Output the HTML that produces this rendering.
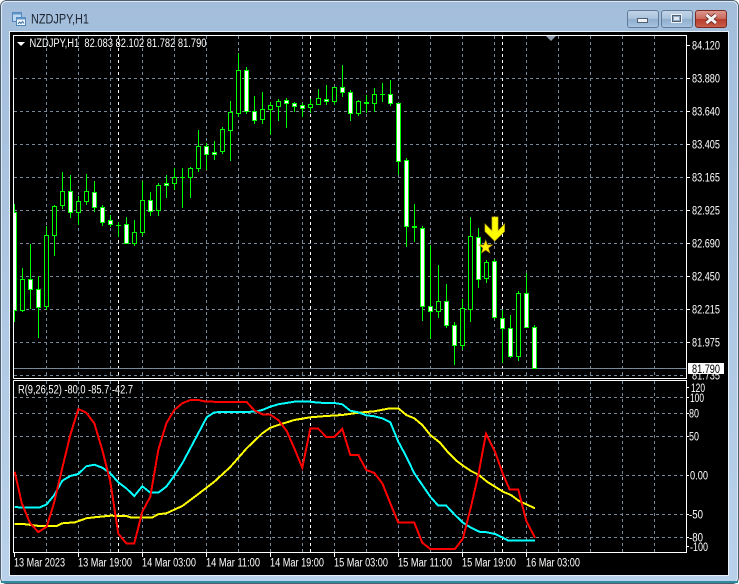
<!DOCTYPE html>
<html><head><meta charset="utf-8"><title>NZDJPY,H1</title>
<style>
html,body{margin:0;padding:0;background:#fff;width:739px;height:584px;overflow:hidden}
svg{display:block}
text{font-family:"Liberation Sans",sans-serif;font-size:11.5px;fill:#fff}
.g{stroke:#778899;stroke-width:1;stroke-dasharray:3 3;fill:none}
.w{stroke:#fff;stroke-width:1;stroke-dasharray:3 3;fill:none}
</style></head><body>
<svg width="739" height="584" viewBox="0 0 739 584" xmlns="http://www.w3.org/2000/svg">
<defs>
<linearGradient id="tb" x1="0" y1="0" x2="0" y2="1"><stop offset="0" stop-color="#a3bedb"/><stop offset="1" stop-color="#b9d1ea"/></linearGradient>
<linearGradient id="bt" x1="0" y1="0" x2="0" y2="1"><stop offset="0" stop-color="#c3d5e8"/><stop offset=".48" stop-color="#a9c2dc"/><stop offset=".52" stop-color="#8fadcd"/><stop offset="1" stop-color="#a9c6e2"/></linearGradient>
<linearGradient id="cl" x1="0" y1="0" x2="0" y2="1"><stop offset="0" stop-color="#dd9a90"/><stop offset=".48" stop-color="#cc6a5e"/><stop offset=".52" stop-color="#b83c2c"/><stop offset="1" stop-color="#c9604c"/></linearGradient>
<clipPath id="cm"><rect x="14" y="36" width="672" height="342"/></clipPath>
<clipPath id="cs"><rect x="14" y="381" width="672" height="172"/></clipPath>
</defs>
<!-- frame -->
<rect x=".5" y=".5" width="738" height="583" rx="6" fill="url(#tb)" stroke="#4d5f70"/>
<rect x="1.5" y="1.5" width="736" height="581" rx="5" fill="none" stroke="#dfe9f3"/>
<rect x="1" y="581" width="737" height="2" fill="#2f8a9c"/>
<rect x="9" y="31" width="720" height="545" fill="#e8f0f8"/>
<rect x="10" y="32" width="718" height="543" fill="#000"/>
<!-- icon -->
<g shape-rendering="crispEdges">
<rect x="12.5" y="12.5" width="9" height="9" fill="#bcd8f2" stroke="#4f84b8"/>
<rect x="12.5" y="12.5" width="9" height="2" fill="#5f95c8"/>
<rect x="16.5" y="17.5" width="9" height="8" fill="#f2f7fc" stroke="#4f84b8"/>
<rect x="16.5" y="17.5" width="9" height="2" fill="#5f95c8"/>
</g>
<path d="M18 24l1.500-2 1.500 1.500 1.500-2 1.500 2" fill="none" stroke="#3a6f9f" stroke-width="1"/>
<text x="31" y="23.500" textLength="58" lengthAdjust="spacingAndGlyphs" style="font-size:13.5px;fill:#1c2530">NZDJPY,H1</text>
<!-- buttons -->
<rect x="627.500" y="10.500" width="31" height="17" rx="2.500" fill="url(#bt)" stroke="#5f7b98"/>
<rect x="661.500" y="10.500" width="31" height="17" rx="2.500" fill="url(#bt)" stroke="#5f7b98"/>
<rect x="695.500" y="10.500" width="31" height="17" rx="2.500" fill="url(#cl)" stroke="#7b2a22"/>
<rect x="637.500" y="18.500" width="10" height="4" fill="#eef3f8" stroke="#4f5f70"/>
<rect x="671.500" y="14.500" width="10" height="8" fill="none" stroke="#eef3f8" stroke-width="1"/>
<rect x="672.500" y="15.500" width="8" height="6" fill="#8fa9c4" stroke="#4f5f70"/>
<rect x="674" y="17" width="5" height="3" fill="#e0e8f0"/>
<path d="M706.500 15l9.500 8M716 15l-9.500 8" stroke="#5f2018" stroke-width="4.500" fill="none"/>
<path d="M706.500 15l9.500 8M716 15l-9.500 8" stroke="#f4f4f4" stroke-width="3" fill="none"/>
<!-- grid main -->
<g clip-path="url(#cm)" shape-rendering="crispEdges">
<path class="g" d="M14 78.500H686M14 111.500H686M14 144.500H686M14 177.500H686M14 210.500H686M14 243.500H686M14 276.500H686M14 309.500H686M14 342.500H686M14 375.500H686"/>
<path class="g" d="M46.500 36V378M78.500 36V378M110.500 36V378M142.500 36V378M174.500 36V378M206.500 36V378M238.500 36V378M270.500 36V378M302.500 36V378M334.500 36V378M366.500 36V378M398.500 36V378M430.500 36V378M462.500 36V378M494.500 36V378M526.500 36V378M558.500 36V378M590.500 36V378M622.500 36V378M654.500 36V378"/>
<path class="w" d="M118.500 36V378M310.500 36V378M502.500 36V378"/>
<path d="M14 368.500H686" stroke="#778899" stroke-width="1" fill="none"/>
<!-- wicks -->
<path fill="none" stroke="#00ff00" stroke-width="1" d="M14.500 204V322M22.500 268V312M30.500 244V309M38.500 276V338M46.500 226V310M54.500 205V256M62.500 172V209M70.500 175V218M78.500 196V225M86.500 174V205M94.500 181V212M102.500 205V226M110.500 215V227M118.500 222V237M126.500 217V244M134.500 220V246M142.500 181V236M150.500 192V216M158.500 183V216M166.500 175V198M174.500 168V190M182.500 168V208M190.500 167V198M198.500 130V172M206.500 143V170M214.500 141V160M222.500 127V154M230.500 101V161M238.500 53V117M246.500 67V114M254.500 96V124M262.500 92V124M270.500 102V135M278.500 99V121M286.500 98V128M294.500 102V112M302.500 103V117M310.500 99V113M318.500 89V105M326.500 85V105M334.500 87V105M342.500 65V97M350.500 90V121M358.500 100V116M366.500 95V113M374.500 88V112M382.500 83V102M390.500 80V106M398.500 103V175M406.500 158V247M414.500 204V242M422.500 226V321M430.500 245V339M438.500 265V318M446.500 284V328M454.500 322V365M462.500 299V350M470.500 217V322M478.500 228V288M486.500 260V283M494.500 259V319M502.500 310V363M510.500 315V358M518.500 291V361M526.500 273V328M534.500 325V369"/>
<!-- dojis -->
<path fill="none" stroke="#00ff00" stroke-width="1" d="M116 225.500H121M180 177.500H185M380 94.500H385"/>
<path fill="none" stroke="#00ff00" stroke-width="2" d="M364 103H369M412 227H417"/>
<!-- hollow -->
<path fill="#000" stroke="#00ff00" stroke-width="1" d="M20.500 279.500h4v31h-4zM44.500 235.500h4v71h-4zM52.500 206.500h4v29h-4zM60.500 191.500h4v14h-4zM76.500 201.500h4v11h-4zM84.500 191.500h4v10h-4zM132.500 232.500h4v11h-4zM140.500 200.500h4v32h-4zM156.500 185.500h4v25h-4zM172.500 177.500h4v6h-4zM188.500 168.500h4v9h-4zM196.500 146.500h4v22h-4zM220.500 129.500h4v22h-4zM228.500 112.500h4v18h-4zM236.500 70.500h4v43h-4zM260.500 109.500h4v10h-4zM268.500 105.500h4v4h-4zM276.500 101.500h4v5h-4zM308.500 104.500h4v3h-4zM316.500 98.500h4v6h-4zM332.500 87.500h4v14h-4zM356.500 101.500h4v12h-4zM372.500 94.500h4v9h-4zM436.500 301.500h4v10h-4zM460.500 308.500h4v37h-4zM468.500 236.500h4v73h-4zM484.500 262.500h4v16h-4zM516.500 293.500h4v63h-4z"/>
<!-- white -->
<path fill="#fff" stroke="#00ff00" stroke-width="1" d="M12.500 212.500h4v98h-4zM28.500 279.500h4v10h-4zM36.500 289.500h4v18h-4zM68.500 191.500h4v21h-4zM92.500 192.500h4v15h-4zM100.500 207.500h4v15h-4zM108.500 220.500h4v4h-4zM124.500 224.500h4v19h-4zM148.500 200.500h4v11h-4zM164.500 183.500h4v2h-4zM204.500 146.500h4v8h-4zM212.500 152.500h4v2h-4zM244.500 70.500h4v41h-4zM252.500 111.500h4v9h-4zM284.500 100.500h4v3h-4zM292.500 103.500h4v3h-4zM300.500 105.500h4v3h-4zM324.500 99.500h4v2h-4zM340.500 87.500h4v5h-4zM348.500 92.500h4v21h-4zM388.500 94.500h4v9h-4zM396.500 103.500h4v58h-4zM404.500 160.500h4v66h-4zM420.500 228.500h4v78h-4zM428.500 306.500h4v5h-4zM444.500 301.500h4v24h-4zM452.500 325.500h4v20h-4zM476.500 237.500h4v42h-4zM492.500 261.500h4v56h-4zM500.500 318.500h4v10h-4zM508.500 328.500h4v28h-4zM524.500 293.500h4v34h-4zM532.500 327.500h4v41h-4z"/>
</g>
<!-- arrow + star -->
<path d="M492 217h6v14l6.500-7v7.500L494.700 241 485 231.500V224l7 7z" fill="#ffff00" stroke="#c9b400" stroke-width=".7"/>
<path d="M485.700 240l1.700 4.900h5.100l-4.100 3.100 1.500 5-4.200-3-4.200 3 1.500-5-4.100-3.100h5.100z" fill="#ffee00" stroke="#b89a00" stroke-width=".6"/>
<path d="M546 36h10l-5 5z" fill="#8f9dac"/>
<!-- grid sub -->
<g clip-path="url(#cs)" shape-rendering="crispEdges">
<path class="g" d="M14 397.500H686M14 413.500H686M14 436.500H686M14 475.500H686M14 514.500H686M14 537.500H686"/>
<path class="g" d="M46.500 381V553M78.500 381V553M110.500 381V553M142.500 381V553M174.500 381V553M206.500 381V553M238.500 381V553M270.500 381V553M302.500 381V553M334.500 381V553M366.500 381V553M398.500 381V553M430.500 381V553M462.500 381V553M494.500 381V553M526.500 381V553M558.500 381V553M590.500 381V553M622.500 381V553M654.500 381V553"/>
<path class="w" d="M118.500 381V553M310.500 381V553M502.500 381V553"/>
<!-- lines -->
<polyline fill="none" stroke="#ffff00" stroke-width="2" points="14.700,524 23.300,524 31.300,525 39.300,526 56.700,526 62.300,523.300 75,522.300 86.300,518.300 94.300,517.300 110.300,515.700 126.300,516 131.700,517.700 151.700,517.700 158.300,514.300 166.300,513.300 182.300,506 198.300,494 214.300,481.700 230,467.300 246.700,448.300 262.300,433.300 270.300,427.700 278.300,425 294.300,420 310.300,417.300 326.300,416 342.300,415 358.300,412.700 374.300,411.300 387.700,408.700 398.300,408.300 406.300,415 414.300,418.300 422.300,425 430.300,435 440,442.700 448,452.300 456,460.300 463,465.700 471,471 479,475 487,481.700 495,486.700 503,491.700 511,495 519,501 535,508.300"/>
<polyline fill="none" stroke="#00ffff" stroke-width="2" points="14.700,507 23.300,507.700 39.300,507.700 46.700,504.300 54.300,495 62.300,480.700 70.300,476 78.300,474 86.300,466.300 94.300,464.700 102.300,467.700 110.300,473.300 118.300,482.300 126.300,488.300 134.300,496 142.300,486.300 150.300,492.700 158.300,492.700 166.300,486.700 174.300,475.700 182.300,463.300 190.300,448.300 198.300,433.300 206.700,417.300 214.300,412.300 230,412 255,411.700 262.300,410 270.300,406.700 278.300,404.300 294.300,401.700 310.300,401.700 318.300,402.700 334.300,403 342.300,404.300 350.300,410.700 358.300,412.300 366.300,415.300 374.300,416.300 382.300,418.300 390.300,422.300 398.300,441.700 406.300,456.700 414.300,473.300 422.300,485 430.300,496.700 438.300,505.700 446.300,505.700 455,515 463,522.700 471,527.700 479,531.700 487,532.300 495,534 503,537.700 508.300,540.700 535,540.700"/>
<polyline fill="none" stroke="#ff0000" stroke-width="2" points="14.700,471.700 21.700,503 30,523 38.300,532 46.700,526.700 54,503 62.300,468 70.300,435 78.300,409 86.300,412.700 94.300,423.300 102.300,450 110.300,481.700 118.300,533.700 126.300,543.300 134.300,543.300 142.300,511.700 150.300,496.700 158.300,450 166.300,423.300 174.300,410 182.300,403.300 190.300,400 198.300,400 206.300,401.700 246.700,402 254.300,410.300 262.300,414.300 270.300,414.700 278.300,420 286.700,431 294.300,448.300 302.300,467.700 310.300,428.700 318.300,428.700 326.300,437 334.300,437 342.300,429 350.300,455 358.300,455 366.300,470 374.300,473 382.300,483.300 390.300,503.300 398.300,522.700 414.300,522.700 422.300,542.700 430.300,549 455,549 463,538.300 471,506.700 478.300,475 486,433.700 495,451.700 503.300,475 509.700,489.700 518.300,489.700 526.300,521 535,537.700"/>
</g>
<!-- borders -->
<g shape-rendering="crispEdges" fill="none" stroke="#fff" stroke-width="1">
<path d="M13.500 378.500V35.500H686.500V378.500H13.500"/>
<path d="M13.500 380.500H686.500V552.500H13.500V380.500"/>
<path d="M687 45.500h3M687 78.500h3M687 111.500h3M687 144.500h3M687 177.500h3M687 210.500h3M687 243.500h3M687 276.500h3M687 309.500h3M687 342.500h3"/>
<path d="M687 387.500h2M687 397.500h2M687 413.500h2M687 436.500h2M687 475.500h2M687 514.500h2M687 537.500h2M687 546.500h2"/>
<path d="M14.500 553v4M78.500 553v4M142.500 553v4M206.500 553v4M270.500 553v4M334.500 553v4M398.500 553v4M462.500 553v4M526.500 553v4"/>
</g>
<!-- header -->
<path d="M17 42h8l-4 4z" fill="#fff"/>
<text x="29.500" y="47" textLength="177" lengthAdjust="spacingAndGlyphs" xml:space="preserve">NZDJPY,H1  82.083 82.102 81.782 81.790</text>
<text x="18" y="393.500" textLength="115" lengthAdjust="spacingAndGlyphs">R(9,26,52) -80.0 -85.7 -42.7</text>
<!-- price labels -->
<g>
<text x="692" y="49.500" textLength="28" lengthAdjust="spacingAndGlyphs">84.120</text>
<text x="692" y="82.500" textLength="28" lengthAdjust="spacingAndGlyphs">83.880</text>
<text x="692" y="115.500" textLength="28" lengthAdjust="spacingAndGlyphs">83.640</text>
<text x="692" y="148.500" textLength="28" lengthAdjust="spacingAndGlyphs">83.405</text>
<text x="692" y="181.500" textLength="28" lengthAdjust="spacingAndGlyphs">83.165</text>
<text x="692" y="214.500" textLength="28" lengthAdjust="spacingAndGlyphs">82.925</text>
<text x="692" y="247.500" textLength="28" lengthAdjust="spacingAndGlyphs">82.690</text>
<text x="692" y="280.500" textLength="28" lengthAdjust="spacingAndGlyphs">82.450</text>
<text x="692" y="313.500" textLength="28" lengthAdjust="spacingAndGlyphs">82.215</text>
<text x="692" y="346.500" textLength="28" lengthAdjust="spacingAndGlyphs">81.975</text>
<text x="692" y="379.500" textLength="28" lengthAdjust="spacingAndGlyphs">81.735</text>
<rect x="688" y="363" width="36" height="11" fill="#fff"/>
<text x="692" y="373" textLength="28" lengthAdjust="spacingAndGlyphs" style="fill:#000">81.790</text>
<text x="691" y="392" textLength="14" lengthAdjust="spacingAndGlyphs">120</text>
<text x="690" y="402" textLength="14" lengthAdjust="spacingAndGlyphs">100</text>
<text x="689" y="417.500" textLength="10" lengthAdjust="spacingAndGlyphs">80</text>
<text x="689" y="440.500" textLength="10" lengthAdjust="spacingAndGlyphs">50</text>
<text x="690" y="479.500" textLength="18" lengthAdjust="spacingAndGlyphs">0.00</text>
<text x="689" y="518.500" textLength="14" lengthAdjust="spacingAndGlyphs">-50</text>
<text x="689" y="541.500" textLength="14" lengthAdjust="spacingAndGlyphs">-80</text>
<text x="690" y="551" textLength="18" lengthAdjust="spacingAndGlyphs">-100</text>
</g>
<!-- time labels -->
<g>
<text x="14" y="566.500" textLength="51" lengthAdjust="spacingAndGlyphs">13 Mar 2023</text>
<text x="78" y="566.500" textLength="54" lengthAdjust="spacingAndGlyphs">13 Mar 19:00</text>
<text x="142" y="566.500" textLength="54" lengthAdjust="spacingAndGlyphs">14 Mar 03:00</text>
<text x="206" y="566.500" textLength="54" lengthAdjust="spacingAndGlyphs">14 Mar 11:00</text>
<text x="270" y="566.500" textLength="54" lengthAdjust="spacingAndGlyphs">14 Mar 19:00</text>
<text x="334" y="566.500" textLength="54" lengthAdjust="spacingAndGlyphs">15 Mar 03:00</text>
<text x="398" y="566.500" textLength="54" lengthAdjust="spacingAndGlyphs">15 Mar 11:00</text>
<text x="462" y="566.500" textLength="54" lengthAdjust="spacingAndGlyphs">15 Mar 19:00</text>
<text x="526" y="566.500" textLength="54" lengthAdjust="spacingAndGlyphs">16 Mar 03:00</text>
</g>
</svg>
</body></html>
